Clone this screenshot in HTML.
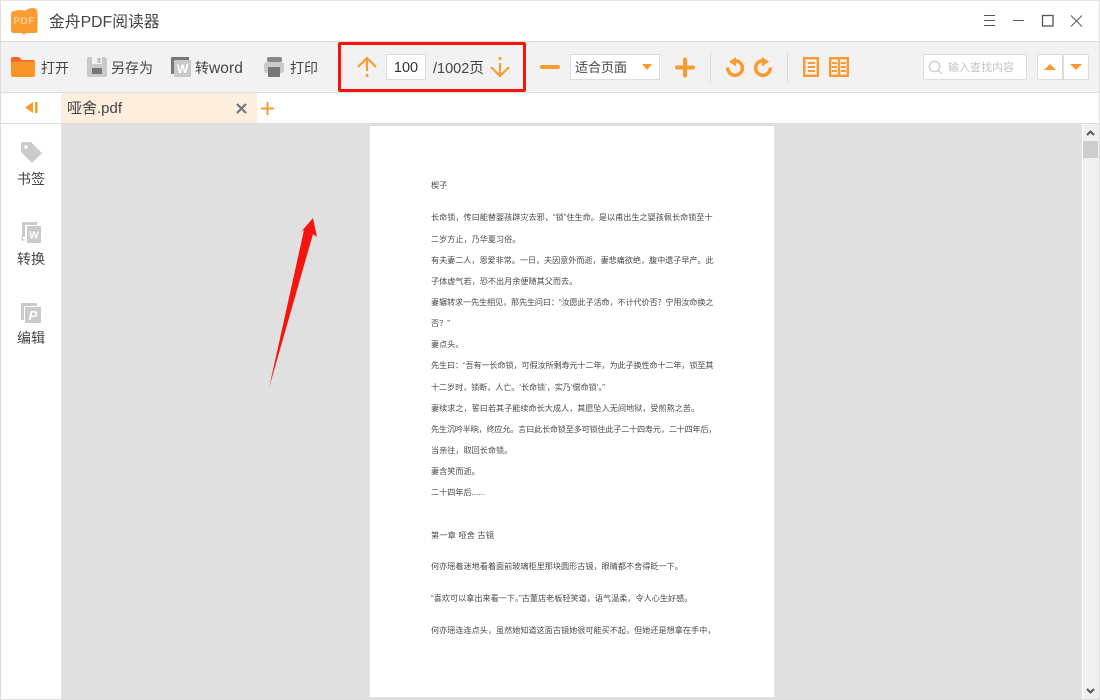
<!DOCTYPE html>
<html lang="zh-CN"><head><meta charset="utf-8"><title>金舟PDF阅读器</title>
<style>
*{box-sizing:border-box}
html,body{margin:0;padding:0;width:1100px;height:700px;overflow:hidden;background:#fff;font-family:"Liberation Sans","Noto Sans CJK SC",sans-serif;color:#333}
.a{position:absolute}
.t{position:absolute;white-space:nowrap;line-height:18px}
.b{font-size:14px;color:#444;top:59px}
.s{font-size:14px;color:#444;left:17px;line-height:18px}
.l{position:absolute;left:431px;font-size:8.13px;line-height:12px;color:#4a4a4a;white-space:nowrap;filter:blur(.25px)}
svg{position:absolute;overflow:visible}
</style></head><body>
<div class="a" style="left:0;top:0;width:1100px;height:700px;border:1px solid #ddd;border-top:1px solid #e4e4e4"></div>

<!-- title bar -->
<svg style="left:11px;top:7px" width="28" height="28" viewBox="0 0 28 28">
<path d="M3 6 Q10 2 15 4 Q21 1 25 2 Q27 3 27 7 L27 23 Q27 26 25 26 L4 26 Q1 26 1 23Z" fill="#f8c896"/>
<path d="M3 4 Q0 4 0 8 L0 23 Q0 26 3 26 L11 26 L13 28 L15 26 L23 26 Q26 26 26 23 L26 5 Q26 1 22 1 Q17 1 14 4 Q9 2 3 4Z" fill="#fb9c30"/>
<text x="13" y="17" font-size="10" font-weight="700" text-anchor="middle" fill="#fcca90" font-family="Liberation Sans" letter-spacing=".4">PDF</text>
</svg>
<div class="t" style="left:49px;top:14px;font-size:15.8px;color:#444">金舟PDF阅读器</div>
<svg style="left:983px;top:14px" width="110" height="16" fill="none" stroke="#555" stroke-width="1">
<path d="M1 1.500H12M1 6.500H12M1 11.500H12"/>
<path d="M30 6.500H41"/>
<rect x="59.500" y="1.500" width="10.500" height="10.500" stroke-width="1.300"/>
<path d="M88 1.500L99 12.500M99 1.500L88 12.500"/>
</svg>

<!-- toolbar -->
<div class="a" style="left:1px;top:41px;width:1098px;height:52px;background:#f2f2f2;border-top:1px solid #ddd;border-bottom:1px solid #ddd"></div>
<svg style="left:11px;top:57px" width="24" height="20" viewBox="0 0 24 20">
<path d="M0 2Q0 0 2 0H8L11 3H22Q24 3 24 5V10H0Z" fill="#f4662a"/>
<path d="M3 4.500H24V18Q24 20 22 20H2Q0 20 0 18V9Q0 4.500 3 4.500Z" fill="#fb9426"/>
</svg>
<div class="t b" style="left:41px">打开</div>
<svg style="left:87px;top:57px" width="20" height="20" viewBox="0 0 20 20">
<path d="M1 0H18L20 2V18.500Q20 20 18.500 20H1.500Q0 20 0 18.500V1Q0 0 1 0Z" fill="#c9c9c9"/>
<rect x="5" y="0" width="10" height="7" fill="#f2f2f2"/><rect x="10.500" y="1" width="3" height="5" fill="#bdbdbd"/>
<rect x="5" y="11" width="10" height="6" fill="#777"/>
</svg>
<div class="t b" style="left:111px">另存为</div>
<svg style="left:171px;top:57px" width="20" height="20" viewBox="0 0 20 20">
<path d="M1 0H18V3H4V17H1Q0 17 0 16V1Q0 0 1 0Z" fill="#777"/>
<rect x="3" y="3" width="17" height="17" rx="1" fill="#c9c9c9"/>
<text x="11.500" y="16" font-size="12" font-weight="700" text-anchor="middle" fill="#fff" font-family="Liberation Sans">W</text>
</svg>
<div class="t b" style="left:195px">转<span style="font-size:15.500px;letter-spacing:.1px">word</span></div>
<svg style="left:264px;top:57px" width="20" height="20" viewBox="0 0 20 20">
<rect x="3" y="0" width="15" height="5" rx="2" fill="#888"/>
<rect x="0" y="5" width="20" height="11" rx="3" fill="#c9c9c9"/>
<rect x="4" y="10" width="12" height="10" fill="#777"/>
</svg>
<div class="t b" style="left:290px">打印</div>

<!-- red box -->
<div class="a" style="left:338px;top:42px;width:188px;height:50px;border:3px solid #f5140f;border-radius:2px"></div>
<div class="a" style="left:342px;top:52px;width:1px;height:30px;background:#ddd"></div>
<svg style="left:357px;top:56px" width="20" height="22" fill="none" stroke="#fb9a2e" stroke-width="2.100">
<path d="M1 11L10 2L19 11M10 3V15"/><path d="M10 18V21" stroke-width="2.600"/>
</svg>
<div class="a" style="left:386px;top:54px;width:40px;height:26px;background:#fff;border:1px solid #ddd;font-size:14.500px;line-height:27px;text-align:center;color:#333">100</div>
<div class="t" style="left:433px;top:60px;font-size:14.500px;color:#444">/1002页</div>
<svg style="left:490px;top:56px" width="20" height="22" fill="none" stroke="#fb9a2e" stroke-width="2.100">
<path d="M1 11L10 20L19 11M10 19V7"/><path d="M10 1V4" stroke-width="2.600"/>
</svg>

<!-- zoom -->
<div class="a" style="left:540px;top:65px;width:20px;height:4px;background:#fb9a2e;border-radius:2px"></div>
<div class="a" style="left:570px;top:54px;width:90px;height:26px;background:#fff;border:1px solid #ddd"></div>
<div class="t" style="left:575px;top:59px;font-size:13px;color:#444">适合页面</div>
<div class="a" style="left:642px;top:64px;width:0;height:0;border-left:5.500px solid transparent;border-right:5.500px solid transparent;border-top:6px solid #fb9a2e"></div>
<svg style="left:675px;top:57px" width="20" height="20" fill="none" stroke="#fb9a2e" stroke-width="4" stroke-linecap="round"><path d="M2 10.500H18M10 2.500V18.500"/></svg>
<div class="a" style="left:710px;top:52px;width:1px;height:30px;background:#ddd"></div>
<svg style="left:726px;top:57px" width="18" height="19" fill="none">
<path d="M8 3.800A7.300 7.300 0 1 1 1.800 10.500" stroke="#fb9a2e" stroke-width="3.500"/><path d="M10 0V9.500L3 4.700Z" fill="#fb9a2e"/>
</svg>
<svg style="left:754px;top:57px" width="18" height="19" fill="none">
<path d="M10 3.800A7.300 7.300 0 1 0 16.200 10.500" stroke="#fb9a2e" stroke-width="3.500"/><path d="M8 0V9.500L15 4.700Z" fill="#fb9a2e"/>
</svg>
<div class="a" style="left:787px;top:52px;width:1px;height:30px;background:#ddd"></div>
<svg style="left:803px;top:57px" width="16" height="20" fill="none" stroke="#fb9a2e">
<rect x="1.200" y="1.200" width="13.600" height="17.600" stroke-width="2.400"/><path d="M5 6H12M5 10H12M5 14H12" stroke-width="1.900"/>
</svg>
<svg style="left:829px;top:57px" width="20" height="20" fill="none" stroke="#fb9a2e">
<rect x="1.200" y="1.200" width="17.600" height="17.600" stroke-width="2.400"/><path d="M10 1V19" stroke-width="2.400"/><path d="M3 6H8M3 10H8M3 14H8M12 6H17M12 10H17M12 14H17" stroke-width="1.900"/>
</svg>

<!-- search -->
<div class="a" style="left:923px;top:54px;width:104px;height:26px;background:#fff;border:1px solid #ddd;border-radius:2px"></div>
<svg style="left:929px;top:61px" width="14" height="14" fill="none" stroke="#ccc" stroke-width="1.300"><circle cx="5.500" cy="5.500" r="5.200"/><path d="M9.300 9.300L13 12.800"/></svg>
<div class="t" style="left:948px;top:59px;font-size:11px;color:#c4c4c4">输入查找内容</div>
<div class="a" style="left:1037px;top:54px;width:26px;height:26px;background:#fff;border:1px solid #ddd;border-radius:2px 0 0 2px"></div>
<div class="a" style="left:1063px;top:54px;width:26px;height:26px;background:#fff;border:1px solid #ddd;border-radius:0 2px 2px 0"></div>
<div class="a" style="left:1044px;top:64px;width:0;height:0;border-left:6px solid transparent;border-right:6px solid transparent;border-bottom:6px solid #fb9a2e"></div>
<div class="a" style="left:1070px;top:64px;width:0;height:0;border-left:6px solid transparent;border-right:6px solid transparent;border-top:6px solid #fb9a2e"></div>

<!-- tab row -->
<svg style="left:25px;top:101px" width="13" height="13"><path d="M0 6.500L8 1V12Z" fill="#fb9a2e"/><rect x="10" y="1" width="2.500" height="11" fill="#fb9a2e"/></svg>
<div class="a" style="left:61px;top:93px;width:196px;height:30px;background:#fdeede"></div>
<div class="t" style="left:67px;top:100px;font-size:15px;color:#444">哑舍.pdf</div>
<svg style="left:236px;top:103px" width="11" height="11" fill="none" stroke="#777" stroke-width="2.200"><path d="M1 1L10 10M10 1L1 10"/></svg>
<svg style="left:261px;top:102px" width="13" height="13" fill="none" stroke="#fb9a2e" stroke-width="2"><path d="M0 6.500H13M6.500 0V13"/></svg>

<!-- sidebar -->
<div class="a" style="left:61px;top:123px;width:1022px;height:576px;background:#e0e0e0"></div>
<div class="a" style="left:1px;top:123px;width:1098px;height:1px;background:#ddd"></div>
<svg style="left:21px;top:142px" width="21" height="21" viewBox="0 0 21 21">
<path d="M1 0H10L21 11L11 21L0 10V1Q0 0 1 0Z" fill="#cbcbcb"/><circle cx="5" cy="5" r="1.800" fill="#fff"/>
</svg>
<div class="t s" style="top:170px">书签</div>
<svg style="left:21px;top:222px" width="20" height="21" viewBox="0 0 20 21">
<path d="M1 0H16V3H4V15H1Z" fill="#cbcbcb"/>
<rect x="6" y="4" width="14" height="17" fill="#cbcbcb"/>
<text x="13" y="16.500" font-size="10" font-weight="700" text-anchor="middle" fill="#fff" font-family="Liberation Sans">W</text>
<path d="M1 15V18H4" fill="none" stroke="#bbb"/>
</svg>
<div class="t s" style="top:250px">转换</div>
<svg style="left:21px;top:303px" width="20" height="20" viewBox="0 0 20 20">
<path d="M0 0H16V3H3V17H0Z" fill="#cbcbcb"/>
<rect x="4" y="4" width="16" height="16" fill="#cbcbcb"/>
<text x="12" y="17" font-size="13" font-weight="700" font-style="italic" text-anchor="middle" fill="#fff" font-family="Liberation Sans">P</text>
</svg>
<div class="t s" style="top:329px">编辑</div>

<!-- arrow -->
<svg style="left:260px;top:210px" width="70" height="190"><path d="M9 178L44 20L41 22L53 8L57 27L53 24Z" fill="#f5140f"/></svg>

<!-- page -->
<div class="a" style="left:370px;top:126px;width:404px;height:571px;background:#fff"></div>
<div class="l" style="top:180px">楔子</div>
<div class="l" style="top:212px">长命锁，传曰能替婴孩辟灾去邪，“锁”住生命。是以甫出生之婴孩佩长命锁至十</div>
<div class="l" style="top:234px">二岁方止，乃华夏习俗。</div>
<div class="l" style="top:255px;letter-spacing:-.05px">有夫妻二人，恩爱非常。一日，夫因意外而逝，妻悲痛欲绝，腹中遗子早产。此</div>
<div class="l" style="top:276px">子体虚气若，恐不出月余便随其父而去。</div>
<div class="l" style="top:297px;letter-spacing:-.13px">妻辗转求一先生相见，那先生问曰：“汝愿此子活命，不计代价否？宁用汝命换之</div>
<div class="l" style="top:318px">否？”</div>
<div class="l" style="top:339px">妻点头。</div>
<div class="l" style="top:360px;letter-spacing:-.13px">先生曰：“吾有一长命锁，可假汝所剩寿元十二年，为此子换性命十二年，锁至其</div>
<div class="l" style="top:382px;letter-spacing:-.1px">十二岁时，锁断，人亡。‘长命锁’，实乃‘偿命锁’。”</div>
<div class="l" style="top:403px">妻续求之，誓曰若其子能续命长大成人，其愿坠入无间地狱，受煎熬之苦。</div>
<div class="l" style="top:424px;letter-spacing:-.2px">先生沉吟半晌，终应允。言曰此长命锁至多可锁住此子二十四寿元，二十四年后，</div>
<div class="l" style="top:445px">当亲往，取回长命锁。</div>
<div class="l" style="top:466px">妻含笑而逝。</div>
<div class="l" style="top:487px">二十四年后......</div>
<div class="l" style="top:530px;letter-spacing:.2px">第一章 哑舍 古镜</div>
<div class="l" style="top:561px">何亦瑶着迷地看着面前玻璃柜里那块圆形古镜，眼睛都不舍得眨一下。</div>
<div class="l" style="top:593px">“喜欢可以拿出来看一下。”古董店老板轻笑道，语气温柔，令人心生好感。</div>
<div class="l" style="top:625px">何亦瑶连连点头，虽然她知道这面古镜她很可能买不起，但她还是想拿在手中，</div>

<!-- scrollbar -->
<div class="a" style="left:1082px;top:124px;width:1px;height:575px;background:#fff"></div>
<div class="a" style="left:1083px;top:124px;width:16px;height:575px;background:#f0f0f0"></div>
<div class="a" style="left:1083px;top:141px;width:15px;height:17px;background:#cdcdcd"></div>
<svg style="left:1086px;top:129px" width="10" height="8" fill="none" stroke="#555" stroke-width="2"><path d="M1 6L4.500 2.500L8 6"/></svg>
<svg style="left:1086px;top:687px" width="10" height="8" fill="none" stroke="#555" stroke-width="2"><path d="M1 2L4.500 5.500L8 2"/></svg>
</body></html>
